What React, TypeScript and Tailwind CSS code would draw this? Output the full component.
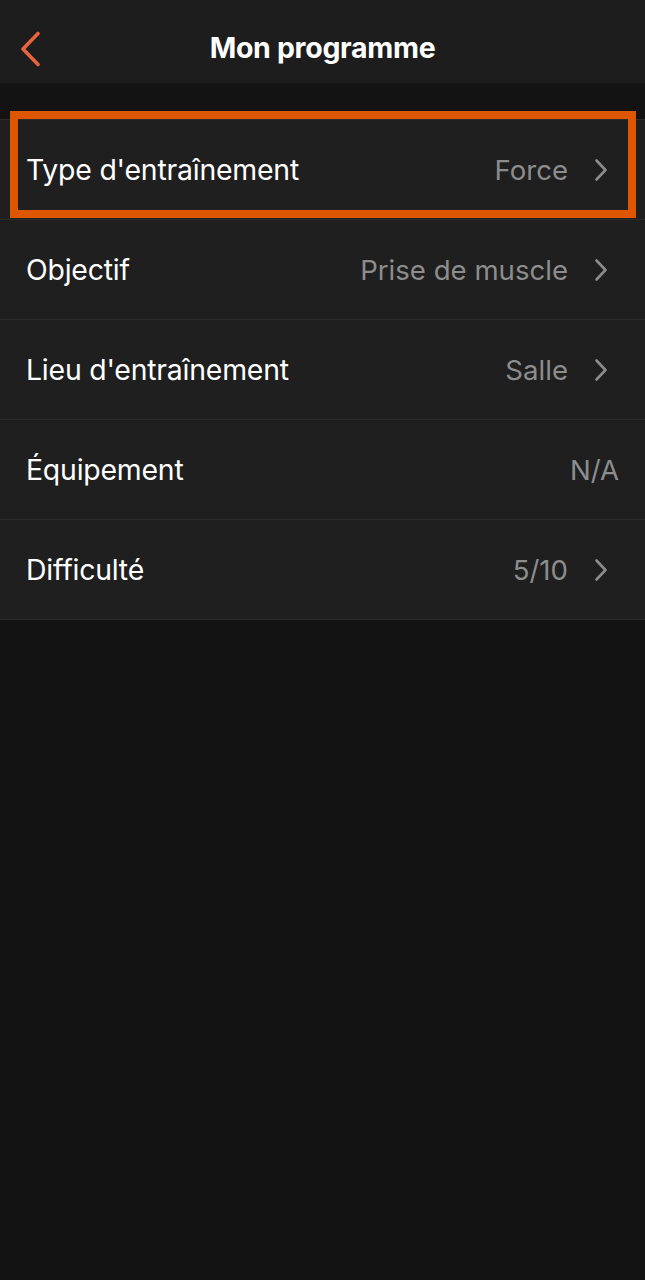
import React from "react";

type Row = { label: string; value: string; chevron: boolean; selected?: boolean };

const rows: Row[] = [
  { label: "Type d'entraînement", value: "Force", chevron: true, selected: true },
  { label: "Objectif", value: "Prise de muscle", chevron: true },
  { label: "Lieu d'entraînement", value: "Salle", chevron: true },
  { label: "Équipement", value: "N/A", chevron: false },
  { label: "Difficulté", value: "5/10", chevron: true },
];

const Chevron = () => (
  <svg width="16" height="24" viewBox="0 0 16 24" fill="none" className="shrink-0">
    <path d="M3.5 2.5l9 9.5-9 9.5" stroke="#8c8c8c" strokeWidth="2.6" strokeLinecap="round" strokeLinejoin="round" />
  </svg>
);

const App: React.FC = () => {
  return (
    <div className="min-h-[1280px] w-full bg-[#131313] font-['Inter',sans-serif]">
      <header className="h-[83px] bg-[#1d1d1d] flex items-center relative">
        <button className="absolute left-[17px] top-[30px] p-0">
          <svg width="26" height="38" viewBox="0 0 26 38" fill="none">
            <path d="M21 3.5L6 19l15 15.5" stroke="#e8643c" strokeWidth="3.6" strokeLinecap="round" strokeLinejoin="round" />
          </svg>
        </button>
        <h1 className="w-full text-center text-white text-[28.5px] font-bold tracking-[-0.3px] pt-[14px]">Mon programme</h1>
      </header>

      <div className="h-[36px]" />

      <ul className="bg-[#1f1f1f] border-t border-[#2c2c2c]">
        {rows.map((r) => (
          <li
            key={r.label}
            className={
              r.selected
                ? "h-[100px] border-b border-[#2c2c2c] relative flex items-center justify-between pl-[26px] pr-[36px] pt-[2px]"
                : "h-[100px] border-b border-[#2c2c2c] flex items-center justify-between pl-[26px] pr-[36px] pt-[2px]"
            }
          >
            <span className="text-white text-[28.4px] tracking-[-0.2px]">{r.label}</span>
            <span className="flex items-center gap-[25px]">
              <span className={r.chevron ? "text-[#8d8d8d] text-[27.6px]" : "text-[#8d8d8d] text-[27.6px] mr-[-10px]"}>{r.value}</span>
              {r.chevron && <Chevron />}
            </span>
            {r.selected && (
              <div className="absolute left-[10px] right-[9px] top-[-9px] bottom-[1px] border-[8px] border-[#df5600]" />
            )}
          </li>
        ))}
      </ul>
    </div>
  );
};

export default App;
